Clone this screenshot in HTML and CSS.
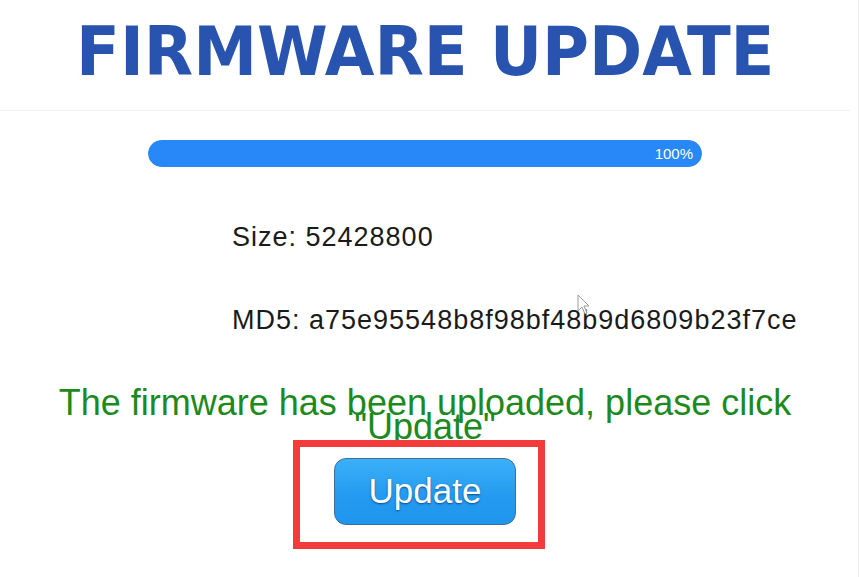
FILE: index.html
```html
<!DOCTYPE html>
<html>
<head>
<meta charset="utf-8">
<title>Firmware Update</title>
<link rel="stylesheet" href="styles.css">
</head>
<body>
<div class="page">
  <header class="header">
    <h1 class="title">FIRMWARE UPDATE</h1>
  </header>
  <div class="progress">
    <div class="progress-fill" style="width:100%">100%</div>
  </div>
  <div class="info">
    <p class="info-line size">Size: 52428800</p>
    <p class="info-line md5">MD5: a75e95548b8f98bf48b9d6809b23f7ce<svg class="cursor" width="14" height="22" viewBox="0 0 14 22"><path d="M1 1 L1 17 L5 13 L8 20 L10 19 L7 12 L12 12 Z" fill="#fff" stroke="#9a9a9a" stroke-width="1"/></svg></p>
  </div>
  <p class="message">The firmware has been uploaded, please click "Update"</p>
  <div class="action">
    <div class="highlight">
      <button class="update-btn" type="button">Update</button>
    </div>
  </div>
</div>
</body>
</html>
```
FILE: styles.css
```css
html, body {
  margin: 0;
  padding: 0;
  background: #fff;
}
body {
  font-family: "Liberation Sans", Arial, sans-serif;
  width: 859px;
  height: 577px;
  overflow: hidden;
  box-shadow: inset -1px 0 0 #ececec;
}
.page {
  width: 850px;
}
.header {
  height: 110px;
  border-bottom: 1px solid #efefef;
  display: flex;
  justify-content: center;
}
.title {
  margin: 0;
  padding-top: 13px;
  font-family: "DejaVu Sans", sans-serif;
  font-weight: bold;
  font-size: 68px;
  line-height: 78px;
  color: #2854b0;
  white-space: nowrap;
  transform: scaleX(0.943);
  transform-origin: center;
}
.progress {
  margin: 29px 0 0 148px;
  width: 554px;
  height: 27px;
  border-radius: 14px;
  background: #e6e6e6;
  overflow: hidden;
}
.progress-fill {
  height: 27px;
  background: #2888f8;
  border-radius: 14px;
  color: #fff;
  font-size: 15px;
  line-height: 28px;
  text-align: right;
  padding-right: 9px;
  box-sizing: border-box;
}
.info {
  padding-left: 232px;
  color: #1a1a1a;
}
.info-line {
  margin: 0;
  font-size: 27px;
  letter-spacing: 1px;
  line-height: 31px;
}
.size {
  margin-top: 55px;
}
.md5 {
  margin-top: 52px;
  position: relative;
}
.cursor {
  position: absolute;
  left: 345px;
  top: -11px;
}
.message {
  margin: 55px 0 0;
  text-align: center;
  color: #1c8a1c;
  font-size: 36px;
  line-height: 24px;
}
.action {
  display: flex;
  justify-content: center;
  margin-top: 1px;
}
.highlight {
  border: 7px solid #f33b3b;
  padding: 11px 22px 17px 34px;
  margin-left: -12px;
}
.update-btn {
  display: block;
  width: 182px;
  height: 67px;
  border: 1px solid #3c6e98;
  border-radius: 12px;
  background: linear-gradient(#3cb0f8, #249bf0 55%, #1f95ee);
  color: #fff;
  font-family: "Liberation Sans", Arial, sans-serif;
  font-size: 35px;
  text-shadow: 0 1px 2px rgba(0, 20, 70, 0.6);
  padding: 0 0 2px;
  cursor: pointer;
}
```
